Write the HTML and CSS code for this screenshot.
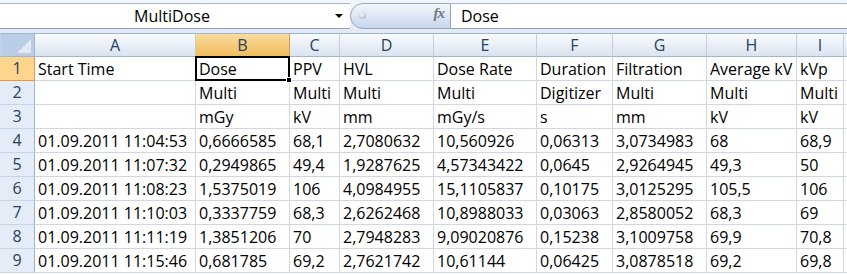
FILE: index.html
```html
<!DOCTYPE html>
<html lang="en">
<head>
  <meta charset="UTF-8">
  <title>MultiDose</title>
  <link rel="stylesheet" href="styles.css">
</head>
<body>
  <div class="bar">
    <div class="namebox">
      <span class="name">MultiDose</span>
      <span class="arrow"></span>
    </div>
    <div class="fxbtn">
      <span class="dot"></span>
      <span class="fx">fx</span>
    </div>
    <div class="formula">Dose</div>
  </div>

  <div class="sheet">
    <div class="corner"><span class="tri"></span></div>
    <div class="ch">A</div>
    <div class="ch sel">B</div>
    <div class="ch">C</div>
    <div class="ch">D</div>
    <div class="ch">E</div>
    <div class="ch">F</div>
    <div class="ch">G</div>
    <div class="ch">H</div>
    <div class="ch">I</div>
    <div class="ch"></div>

    <div class="rh sel">1</div>
    <div class="c">Start Time</div>
    <div class="c active">Dose<span class="sel-box"><span class="handle"></span></span></div>
    <div class="c">PPV</div>
    <div class="c">HVL</div>
    <div class="c">Dose Rate</div>
    <div class="c">Duration</div>
    <div class="c">Filtration</div>
    <div class="c">Average kV</div>
    <div class="c">kVp</div>
    <div class="c"></div>

    <div class="rh">2</div>
    <div class="c"></div>
    <div class="c">Multi</div>
    <div class="c">Multi</div>
    <div class="c">Multi</div>
    <div class="c">Multi</div>
    <div class="c">Digitizer</div>
    <div class="c">Multi</div>
    <div class="c">Multi</div>
    <div class="c">Multi</div>
    <div class="c"></div>

    <div class="rh">3</div>
    <div class="c"></div>
    <div class="c">mGy</div>
    <div class="c">kV</div>
    <div class="c">mm</div>
    <div class="c">mGy/s</div>
    <div class="c">s</div>
    <div class="c">mm</div>
    <div class="c">kV</div>
    <div class="c">kV</div>
    <div class="c"></div>

    <div class="rh">4</div>
    <div class="c">01.09.2011 11:04:53</div>
    <div class="c">0,6666585</div>
    <div class="c">68,1</div>
    <div class="c">2,7080632</div>
    <div class="c">10,560926</div>
    <div class="c">0,06313</div>
    <div class="c">3,0734983</div>
    <div class="c">68</div>
    <div class="c">68,9</div>
    <div class="c"></div>

    <div class="rh">5</div>
    <div class="c">01.09.2011 11:07:32</div>
    <div class="c">0,2949865</div>
    <div class="c">49,4</div>
    <div class="c">1,9287625</div>
    <div class="c">4,57343422</div>
    <div class="c">0,0645</div>
    <div class="c">2,9264945</div>
    <div class="c">49,3</div>
    <div class="c">50</div>
    <div class="c"></div>

    <div class="rh">6</div>
    <div class="c">01.09.2011 11:08:23</div>
    <div class="c">1,5375019</div>
    <div class="c">106</div>
    <div class="c">4,0984955</div>
    <div class="c">15,1105837</div>
    <div class="c">0,10175</div>
    <div class="c">3,0125295</div>
    <div class="c">105,5</div>
    <div class="c">106</div>
    <div class="c"></div>

    <div class="rh">7</div>
    <div class="c">01.09.2011 11:10:03</div>
    <div class="c">0,3337759</div>
    <div class="c">68,3</div>
    <div class="c">2,6262468</div>
    <div class="c">10,8988033</div>
    <div class="c">0,03063</div>
    <div class="c">2,8580052</div>
    <div class="c">68,3</div>
    <div class="c">69</div>
    <div class="c"></div>

    <div class="rh">8</div>
    <div class="c">01.09.2011 11:11:19</div>
    <div class="c">1,3851206</div>
    <div class="c">70</div>
    <div class="c">2,7948283</div>
    <div class="c">9,09020876</div>
    <div class="c">0,15238</div>
    <div class="c">3,1009758</div>
    <div class="c">69,9</div>
    <div class="c">70,8</div>
    <div class="c"></div>

    <div class="rh">9</div>
    <div class="c">01.09.2011 11:15:46</div>
    <div class="c">0,681785</div>
    <div class="c">69,2</div>
    <div class="c">2,7621742</div>
    <div class="c">10,61144</div>
    <div class="c">0,06425</div>
    <div class="c">3,0878518</div>
    <div class="c">69,2</div>
    <div class="c">69,8</div>
    <div class="c"></div>
  </div>
</body>
</html>
```

FILE: styles.css
```css
* {
  box-sizing: border-box;
}
html, body {
  margin: 0;
  height: 274px;
  overflow: hidden;
  background-color: #fff;
  font-family: "Open Sans", "Liberation Sans", sans-serif;
  font-size: 16px;
  color: #000;
}

/* formula bar */
.bar {
  display: flex;
  height: 33px;
  padding: 3px 0 4px;
  background: linear-gradient(#f3f6fb, #e2e9f3);
}
.namebox, .formula {
  border-top: 1px solid #a4b6cd;
  border-bottom: 1px solid #8ca1bd;
  background-color: #fff;
}
.namebox {
  position: relative;
  width: 350px;
  line-height: 24px;
}
.name {
  display: block;
  width: 344px;
  text-align: center;
}
.arrow {
  position: absolute;
  left: 335px;
  top: 10px;
  border-left: 4px solid transparent;
  border-right: 4px solid transparent;
  border-top: 4px solid #000;
}
.fxbtn {
  position: relative;
  width: 101px;
  border: 1px solid #93a8c4;
  border-radius: 13px 0 0 13px;
  background: linear-gradient(#f4f7fc, #dbe5f3 55%, #c8d6ea);
}
.dot {
  position: absolute;
  left: 8px;
  top: 8px;
  width: 7px;
  height: 7px;
  border-radius: 50%;
  background: radial-gradient(circle at 40% 35%, #fff, #b8c0cc 70%, #9aa4b2);
}
.fx {
  position: absolute;
  right: 6px;
  top: 1px;
  font-family: "Liberation Serif", serif;
  font-style: italic;
  font-weight: bold;
  font-size: 15px;
  letter-spacing: -1px;
  color: #6e7784;
}
.formula {
  flex: 1;
  padding-left: 10px;
  line-height: 24px;
}

/* grid */
.sheet {
  display: grid;
  grid-template-columns: 35px 161px 94px 50px 94px 103px 76px 94px 90px 47px 1fr;
  grid-auto-rows: 24px;
}
.c, .ch, .rh, .corner {
  white-space: nowrap;
  overflow: hidden;
}
.c {
  border-right: 1px solid #d0d7e5;
  border-bottom: 1px solid #d0d7e5;
  padding: 1px 3px 0;
  line-height: 23px;
}
.c.active {
  position: relative;
  overflow: visible;
}
.sel-box {
  position: absolute;
  top: -1px;
  left: -1px;
  right: -1px;
  bottom: -1px;
  border: 2px solid #000;
}
.handle {
  position: absolute;
  right: -4px;
  bottom: -4px;
  width: 6px;
  height: 6px;
  background-color: #000;
  border: 1px solid #fff;
}
.ch {
  border-top: 1px solid #9eb6ce;
  border-right: 1px solid #c0cfe0;
  border-bottom: 1px solid #9eb6ce;
  background: linear-gradient(#f9fbfd, #e8eef7 55%, #dae3ef);
  text-align: center;
  line-height: 22px;
  color: #27415f;
}
.ch.sel {
  border-right-color: #f29536;
  border-bottom-color: #f29536;
  background: linear-gradient(#f9dc9f, #f4c978 55%, #f1bd5c);
}
.rh {
  border-right: 1px solid #9eb6ce;
  border-bottom: 1px solid #c5d4e6;
  background-color: #e4ecf7;
  text-align: center;
  line-height: 23px;
  color: #27415f;
}
.rh.sel {
  border-right-color: #f29536;
  border-bottom-color: #f29536;
  background-color: #fed58c;
}
.corner {
  position: relative;
  border-top: 1px solid #9eb6ce;
  border-right: 1px solid #9eb6ce;
  border-bottom: 1px solid #9eb6ce;
  border-left: 1px solid #c5d4e6;
  background-color: #b9cde8;
}
.tri {
  position: absolute;
  right: 3px;
  bottom: 3px;
  border-left: 14px solid transparent;
  border-bottom: 14px solid #e3eaf3;
}
```
